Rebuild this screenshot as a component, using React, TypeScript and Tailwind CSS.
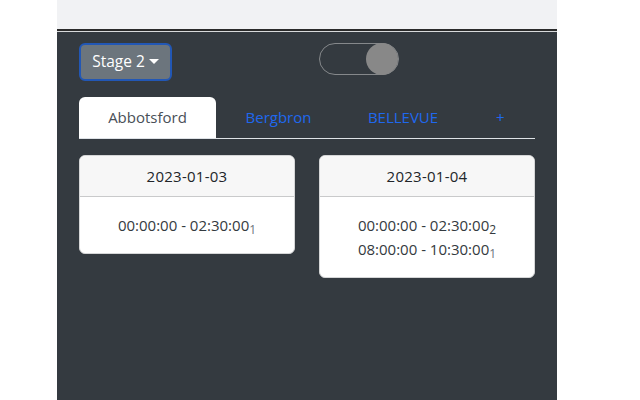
const font = "[font-family:'Open_Sans','Noto_Sans',sans-serif]";

function DayCard({ date, slots }: { date: string; slots: [string, string, string?][] }) {
  return (
    <div className="flex-1 self-start overflow-hidden rounded-md border border-[#d5d6d7] bg-white">
      <div className="h-[41px] border-b border-[#c9cacb] bg-[#f7f7f7] text-center text-[15px] leading-[40px] tracking-[0.25px] text-[#212529]">{date}</div>
      <div className="px-4 pt-[16px] pb-[16px] text-center text-[15px] leading-[24px] text-[#343a40]">
        {slots.map(([time, count, color]) => (
          <div key={time}>
            {time}
            <sub className={`text-[12px] ${color ?? "text-[#6c757d]"}`}>{count}</sub>
          </div>
        ))}
      </div>
    </div>
  );
}

export default function App() {
  return (
    <div className={`flex h-[400px] w-[640px] justify-center overflow-hidden bg-white pr-[83px] pl-[57px] ${font}`}>
      <div className="flex w-[500px] flex-col bg-[#343a40]">
        <div className="h-[29px] bg-[#f1f2f4]" />
        <div className="h-[2px] bg-[#2b2b2b]" />
        <div className="h-[1px] bg-[#d8dadc]" />
        <div className="flex flex-col px-[22px] pt-[11px]">
          <div className="flex h-[38px] items-start">
            <button className="flex h-[38px] w-[93px] items-center justify-center gap-[4px] rounded-md border-2 border-[#2257b5] bg-[#6c757d] text-[15.5px] text-white">
              Stage 2
              <span className="mt-[-2px] h-0 w-0 border-x-[5px] border-t-[5px] border-x-transparent border-t-white" />
            </button>
            <div className="ml-[147px] flex h-[32px] w-[80px] justify-end rounded-full border border-[#85888b]">
              <span className="my-[-1px] h-[32px] w-[32px] rounded-full bg-[#888888]" />
            </div>
          </div>
          <div className="mt-[16px] flex h-[42px] items-stretch border-b border-[#dee2e6] text-[15px] text-[#1f68ee]">
            <div className="flex w-[137px] items-center justify-center rounded-t-md bg-white text-[#495057]">Abbotsford</div>
            <div className="flex w-[125px] items-center justify-center">Bergbron</div>
            <div className="ml-[32px] flex w-[60px] items-center justify-center">BELLEVUE</div>
            <div className="ml-[63px] flex items-center">+</div>
          </div>
          <div className="mt-[16px] flex gap-[24px]">
            <DayCard date="2023-01-03" slots={[["00:00:00 - 02:30:00", "1"]]} />
            <DayCard date="2023-01-04" slots={[["00:00:00 - 02:30:00", "2", "text-[#343a40]"], ["08:00:00 - 10:30:00", "1"]]} />
          </div>
        </div>
      </div>
    </div>
  );
}
